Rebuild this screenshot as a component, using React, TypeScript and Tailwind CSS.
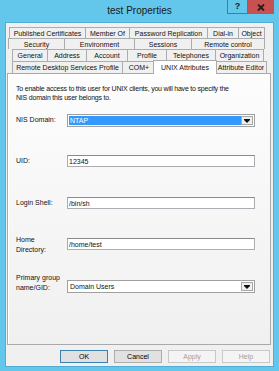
import React from "react";

type Tab = { label: string; w: number; selected?: boolean };

const rows: { ml: number; h: number; tabs: Tab[] }[] = [
    {
        ml: 3,
        h: 11,
        tabs: [
            { label: "Published Certificates", w: 76 },
            { label: "Member Of", w: 44 },
            { label: "Password Replication", w: 78 },
            { label: "Dial-in", w: 31 },
            { label: "Object", w: 27 },
        ],
    },
    {
        ml: 2,
        h: 11,
        tabs: [
            { label: "Security", w: 56 },
            { label: "Environment", w: 70 },
            { label: "Sessions", w: 57 },
            { label: "Remote control", w: 74 },
        ],
    },
    {
        ml: 6,
        h: 12,
        tabs: [
            { label: "General", w: 35 },
            { label: "Address", w: 39 },
            { label: "Account", w: 41 },
            { label: "Profile", w: 39 },
            { label: "Telephones", w: 49 },
            { label: "Organization", w: 49 },
        ],
    },
    {
        ml: 6,
        h: 12,
        tabs: [
            { label: "Remote Desktop Services Profile", w: 110 },
            { label: "COM+", w: 33 },
            { label: "UNIX Attributes", w: 60, selected: true },
            { label: "Attribute Editor", w: 52 },
        ],
    },
];

function DropArrow() {
    return (
        <div className="w-[12px] h-full border border-[#a8a8a8] bg-[#efefef] flex items-center justify-center">
            <svg width="6" height="4" viewBox="0 0 6 4">
                <path d="M0 0h6v1L3 4 0 1z" fill="#111" />
            </svg>
        </div>
    );
}

function TextBox({ value }: { value: string }) {
    return (
        <div className="w-[188px] h-[12px] bg-white border border-[#abadb3] border-t-[#8a8a8a] flex items-center px-[1px] leading-none">
            {value}
        </div>
    );
}

function Button({ label, kind }: { label: string; kind: "default" | "normal" | "disabled" }) {
    const cls =
        kind === "default"
            ? "border-[#3c7fb1] bg-[#e1e1e1] text-black"
            : kind === "normal"
            ? "border-[#adadad] bg-[#e1e1e1] text-black"
            : "border-[#c8c8c8] bg-[#f4f4f4] text-[#a0a0a0]";
    return (
        <div className={`w-[48px] h-[13px] border flex items-center justify-center leading-none ${cls}`}>
            {label}
        </div>
    );
}

export default function App() {
    return (
        <div
            className="w-[279px] h-[371px] bg-[#63c6eb] flex flex-col px-[5px] pb-[4px] text-[7px] text-[#111]"
            style={{ fontFamily: '"Liberation Sans", Arial, sans-serif' }}
        >
            {/* title bar */}
            <div className="h-[22px] grid grid-cols-[1fr_auto_1fr]">
                <div />
                <div className="flex items-center pb-[1px] text-[10px] text-[#1a1a1a]">test Properties</div>
                <div className="flex justify-end items-start">
                    <div className="w-[21px] h-[14px] border border-t-0 border-[#2f86ad] flex items-center justify-center text-[9px] font-bold text-[#1a1a1a] leading-none">
                        ?
                    </div>
                    <div className="w-[26px] h-[14px] bg-[#c75050] flex items-center justify-center">
                        <svg width="8" height="7" viewBox="0 0 8 7">
                            <path d="M1 0.5l6 6M7 0.5l-6 6" stroke="#2a1a1a" strokeWidth="1.8" />
                        </svg>
                    </div>
                </div>
            </div>

            {/* dialog body */}
            <div className="flex-1 bg-[#f0f0f0] border border-[#52acd4] flex flex-col pt-[4px] pb-[3px]">
                {/* tabs */}
                <div className="flex flex-col">
                    {rows.map((row, ri) => (
                        <div key={ri} className="flex items-end" style={{ marginLeft: row.ml, height: row.h }}>
                            {row.tabs.map((t, ti) =>
                                t.selected ? (
                                    <div
                                        key={ti}
                                        className="relative z-10 -mx-[2px] -mb-px h-[14px] bg-white border border-b-0 border-[#acacac] flex items-center justify-center leading-none whitespace-nowrap"
                                        style={{ width: t.w + 4 }}
                                    >
                                        {t.label}
                                    </div>
                                ) : (
                                    <div
                                        key={ti}
                                        className={`h-full bg-[#f0f0f0] border-t border-l border-[#acacac] flex items-center justify-center leading-none whitespace-nowrap ${
                                            ti === row.tabs.length - 1 ? "border-r" : ""
                                        }`}
                                        style={{ width: t.w }}
                                    >
                                        {t.label}
                                    </div>
                                )
                            )}
                        </div>
                    ))}
                </div>

                {/* tab page */}
                <div className="ml-[1px] mr-[2px] h-[272px] border border-[#a9a9a9] bg-linear-to-b from-[#fdfdfd] to-[#f0f0f0] shadow-[inset_1px_1px_0_#ffffff] flex flex-col pl-[8px] pt-[10px]">
                    <p className="leading-[9px] tracking-[-0.2px] whitespace-nowrap">
                        To enable access to this user for UNIX clients, you will have to specify the
                        <br />
                        NIS domain this user belongs to.
                    </p>

                    <div className="mt-[12px] h-[13px] flex items-center">
                        <div className="w-[51px]">NIS Domain:</div>
                        <div className="w-[188px] h-full bg-white border border-[#a0a0a0] flex items-stretch p-[1px]">
                            <div className="flex-1 bg-[#3399ff] text-white flex items-center pl-[1px] leading-none">
                                NTAP
                            </div>
                            <DropArrow />
                        </div>
                    </div>

                    <div className="mt-[28px] h-[12px] flex items-center">
                        <div className="w-[51px]">UID:</div>
                        <TextBox value="12345" />
                    </div>

                    <div className="mt-[30px] h-[12px] flex items-center">
                        <div className="w-[51px]">Login Shell:</div>
                        <TextBox value="/bin/sh" />
                    </div>

                    <div className="mt-[26px] flex items-start">
                        <div className="w-[51px] leading-[10px]">
                            Home
                            <br />
                            Directory:
                        </div>
                        <div className="mt-[3px]">
                            <TextBox value="/home/test" />
                        </div>
                    </div>

                    <div className="mt-[18px] flex items-start">
                        <div className="w-[51px] leading-[10px] whitespace-nowrap">
                            Primary group
                            <br />
                            name/GID:
                        </div>
                        <div className="mt-[7px] w-[188px] h-[13px] bg-white border border-[#a0a0a0] flex items-stretch p-[1px]">
                            <div className="flex-1 flex items-center pl-[1px] leading-none">Domain Users</div>
                            <DropArrow />
                        </div>
                    </div>
                </div>

                {/* buttons */}
                <div className="mt-[5px] pr-[3px] flex justify-end gap-[6px]">
                    <Button label="OK" kind="default" />
                    <Button label="Cancel" kind="normal" />
                    <Button label="Apply" kind="disabled" />
                    <Button label="Help" kind="disabled" />
                </div>
            </div>
        </div>
    );
}
